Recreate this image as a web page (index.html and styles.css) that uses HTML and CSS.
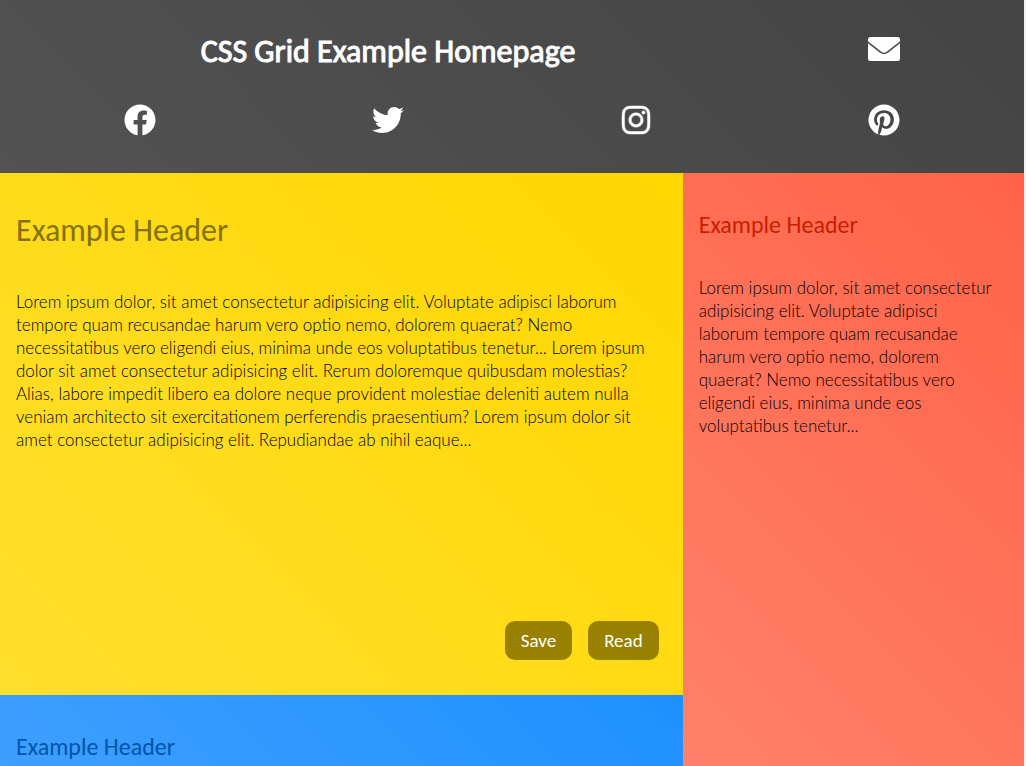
FILE: index.html
```html
<!DOCTYPE html>
<html lang="en">
<head>
<meta charset="utf-8">
<meta name="viewport" content="width=device-width, initial-scale=1">
<title>CSS Grid Example Homepage</title>
<link rel="stylesheet" href="styles.css">
</head>
<body>
<div class="page">
  <header class="site-header">
    <h1 class="site-title">CSS Grid Example Homepage</h1>
    <a class="icon-link" href="#mail" aria-label="Email">
      <svg class="icon" viewBox="0 0 32 32" aria-hidden="true"><rect y="4" width="32" height="24" rx="2.5" fill="#fff"/><path d="M-1 8.5L12.5 19Q16 22 19.5 19L33 8.5" fill="none" stroke="#484848" stroke-width="1.6"/></svg>
    </a>
    <a class="icon-link" href="#facebook" aria-label="Facebook">
      <svg class="icon" viewBox="0 0 512 512" aria-hidden="true"><path fill="#fff" d="M504 256C504 119 393 8 256 8S8 119 8 256c0 123.78 90.69 226.38 209.25 245V327.69h-63V256h63v-54.64c0-62.15 37-96.48 93.67-96.48 27.14 0 55.52 4.84 55.52 4.84v61h-31.28c-30.8 0-40.41 19.12-40.41 38.73V256h68.78l-11 71.69h-57.78V501C413.31 482.38 504 379.78 504 256z"/></svg>
    </a>
    <a class="icon-link" href="#twitter" aria-label="Twitter">
      <svg class="icon" viewBox="0 0 512 512" aria-hidden="true"><path fill="#fff" d="M459.37 151.716c.325 4.548.325 9.097.325 13.645 0 138.72-105.583 298.558-298.558 298.558-59.452 0-114.68-17.219-161.137-47.106 8.447.974 16.568 1.299 25.34 1.299 49.055 0 94.213-16.568 130.274-44.832-46.132-.975-84.792-31.188-98.112-72.772 6.498.974 12.995 1.624 19.818 1.624 9.421 0 18.843-1.3 27.614-3.573-48.081-9.747-84.143-51.98-84.143-102.985v-1.299c13.969 7.797 30.214 12.67 47.431 13.319-28.264-18.843-46.781-51.005-46.781-87.391 0-19.492 5.197-37.36 14.294-52.954 51.655 63.675 129.3 105.258 216.365 109.807-1.624-7.797-2.599-15.918-2.599-24.04 0-57.828 46.782-104.934 104.934-104.934 30.213 0 57.502 12.67 76.67 33.137 23.715-4.548 46.456-13.32 66.599-25.34-7.798 24.366-24.366 44.833-46.132 57.827 21.117-2.273 41.584-8.122 60.426-16.243-14.292 20.791-32.161 39.308-52.628 54.253z"/></svg>
    </a>
    <a class="icon-link" href="#instagram" aria-label="Instagram">
      <svg class="icon" viewBox="-32 0 512 512" aria-hidden="true"><path fill="#fff" stroke="#fff" stroke-width="8" d="M224.1 141c-63.6 0-114.9 51.3-114.9 114.9s51.3 114.9 114.9 114.9S339 319.5 339 255.9 287.7 141 224.1 141zm0 189.6c-41.1 0-74.7-33.5-74.7-74.7s33.5-74.7 74.7-74.7 74.7 33.5 74.7 74.7-33.6 74.7-74.7 74.7zm146.4-194.3c0 14.9-12 26.8-26.8 26.8-14.9 0-26.8-12-26.8-26.8s12-26.8 26.8-26.8 26.8 12 26.8 26.8zm76.1 27.2c-1.7-35.9-9.9-67.7-36.2-93.9-26.2-26.2-58-34.4-93.9-36.2-37-2.1-147.9-2.1-184.9 0-35.8 1.7-67.6 9.9-93.9 36.1s-34.4 58-36.2 93.9c-2.1 37-2.1 147.9 0 184.9 1.7 35.9 9.9 67.7 36.2 93.9s58 34.4 93.9 36.2c37 2.1 147.9 2.1 184.9 0 35.9-1.7 67.7-9.9 93.9-36.2 26.2-26.2 34.4-58 36.2-93.9 2.1-37 2.1-147.8 0-184.8zM398.8 388c-7.8 19.6-22.9 34.7-42.6 42.6-29.5 11.7-99.5 9-132.1 9s-102.7 2.6-132.1-9c-19.6-7.8-34.7-22.9-42.6-42.6-11.7-29.5-9-99.5-9-132.1s-2.6-102.7 9-132.1c7.8-19.6 22.9-34.7 42.6-42.6 29.5-11.7 99.5-9 132.1-9s102.7-2.6 132.1 9c19.6 7.8 34.7 22.9 42.6 42.6 11.7 29.5 9 99.5 9 132.1s2.7 102.7-9 132.1z"/></svg>
    </a>
    <a class="icon-link" href="#pinterest" aria-label="Pinterest">
      <svg class="icon" viewBox="-8 0 512 512" aria-hidden="true"><path fill="#fff" d="M496 256c0 137-111 248-248 248-25.6 0-50.2-3.9-73.4-11.1 10.1-16.5 25.2-43.5 30.8-65 3-11.6 15.4-59 15.4-59 8.1 15.4 31.7 28.5 56.8 28.5 74.8 0 128.7-68.8 128.7-154.3 0-81.9-66.9-143.2-152.9-143.2-107 0-163.9 71.8-163.9 150.1 0 36.4 19.4 81.7 50.3 96.1 4.7 2.2 7.2 1.2 8.3-3.3.8-3.4 5-20.3 6.9-28.1.6-2.5.3-4.7-1.7-7.1-10.1-12.5-18.3-35.3-18.3-56.6 0-54.7 41.4-107.6 112-107.6 60.9 0 103.6 41.5 103.6 100.9 0 67.1-33.9 113.6-78 113.6-24.3 0-42.6-20.1-36.7-44.8 7-29.5 20.5-61.3 20.5-82.6 0-19-10.2-34.9-31.4-34.9-24.9 0-44.9 25.7-44.9 60.2 0 22 7.4 36.8 7.4 36.8s-24.5 103.8-29 123.2c-5 21.4-3 51.6-.9 71.2C65.4 450.9 0 361.1 0 256 0 119 111 8 248 8s248 111 248 248z"/></svg>
    </a>
  </header>
  <main class="content">
    <div class="column">
      <article class="panel panel-gold">
        <h2 class="heading heading-large">Example Header</h2>
        <p class="text">Lorem ipsum dolor, sit amet consectetur adipisicing elit. Voluptate adipisci laborum tempore quam recusandae harum vero optio nemo, dolorem quaerat? Nemo necessitatibus vero eligendi eius, minima unde eos voluptatibus tenetur... Lorem ipsum dolor sit amet consectetur adipisicing elit. Rerum doloremque quibusdam molestias? Alias, labore impedit libero ea dolore neque provident molestiae deleniti autem nulla veniam architecto sit exercitationem perferendis praesentium? Lorem ipsum dolor sit amet consectetur adipisicing elit. Repudiandae ab nihil eaque...</p>
        <div class="actions">
          <button class="button" type="button">Save</button>
          <button class="button" type="button">Read</button>
        </div>
      </article>
      <article class="panel panel-blue">
        <h3 class="heading">Example Header</h3>
      </article>
    </div>
    <aside class="panel panel-tomato">
      <h3 class="heading">Example Header</h3>
      <p class="text">Lorem ipsum dolor, sit amet consectetur adipisicing elit. Voluptate adipisci laborum tempore quam recusandae harum vero optio nemo, dolorem quaerat? Nemo necessitatibus vero eligendi eius, minima unde eos voluptatibus tenetur...</p>
    </aside>
  </main>
</div>
</body>
</html>
```
FILE: styles.css
```css
* {
  box-sizing: border-box;
}

body {
  margin: 0;
  background: #f1f1f1;
  font-family: Carlito, Lato, sans-serif;
  font-size: 19px;
  line-height: 23px;
  color: #000;
}

.page {
  display: flex;
  flex-direction: column;
  height: 100vh;
  margin-right: 2px;
  overflow: hidden;
}

.site-header {
  flex: none;
  display: grid;
  grid-template-columns: repeat(4, 1fr);
  row-gap: 34px;
  align-items: start;
  padding: 33px 16px 37px;
  background: linear-gradient(45deg, #525252, #444);
  color: #fff;
}

.site-title {
  grid-column: span 3;
  margin: 0;
  font-size: 32px;
  line-height: 37px;
  font-weight: 400;
  text-align: center;
  -webkit-text-stroke: 1px #fff;
}

.icon-link {
  display: flex;
  justify-content: center;
}

.icon {
  width: 32px;
  height: 32px;
}

.content {
  flex: 1;
  display: grid;
  grid-template-columns: 2fr 1fr;
  min-height: 0;
}

.column {
  display: flex;
  flex-direction: column;
}

.panel {
  display: flex;
  flex-direction: column;
  padding: 36px 16px 27px;
}

.panel-gold {
  min-height: 522px;
  background: linear-gradient(45deg, #ffdf2e, #ffd700);
}

.panel-blue {
  flex: 1 0 auto;
  min-height: 350px;
  background: linear-gradient(45deg, #4aa5ff, #1e90ff);
}

.panel-tomato {
  min-height: 872px;
  background: linear-gradient(45deg, #ff8a75, #ff6347);
}

.heading {
  margin: 0 0 36px;
  font-size: 24px;
  line-height: 31px;
  font-weight: 400;
}

.heading-large {
  margin-bottom: 38px;
  font-size: 32px;
  line-height: 43px;
}

.panel-gold .heading {
  color: #857000;
}

.panel-blue .heading {
  color: #0054a8;
}

.panel-tomato .heading {
  color: #c71f00;
}

.text {
  margin: 0;
  font-family: "Lato Light", Lato, sans-serif;
  font-size: 17px;
  font-weight: 300;
}

.panel-tomato .text {
  padding-right: 12px;
}

.actions {
  display: flex;
  justify-content: flex-end;
  gap: 16px;
  margin-top: auto;
  padding: 8px;
}

.button {
  padding: 8px 16px;
  border: 0;
  border-radius: 10px;
  background: #998100;
  color: #fff;
  font: inherit;
}
```
